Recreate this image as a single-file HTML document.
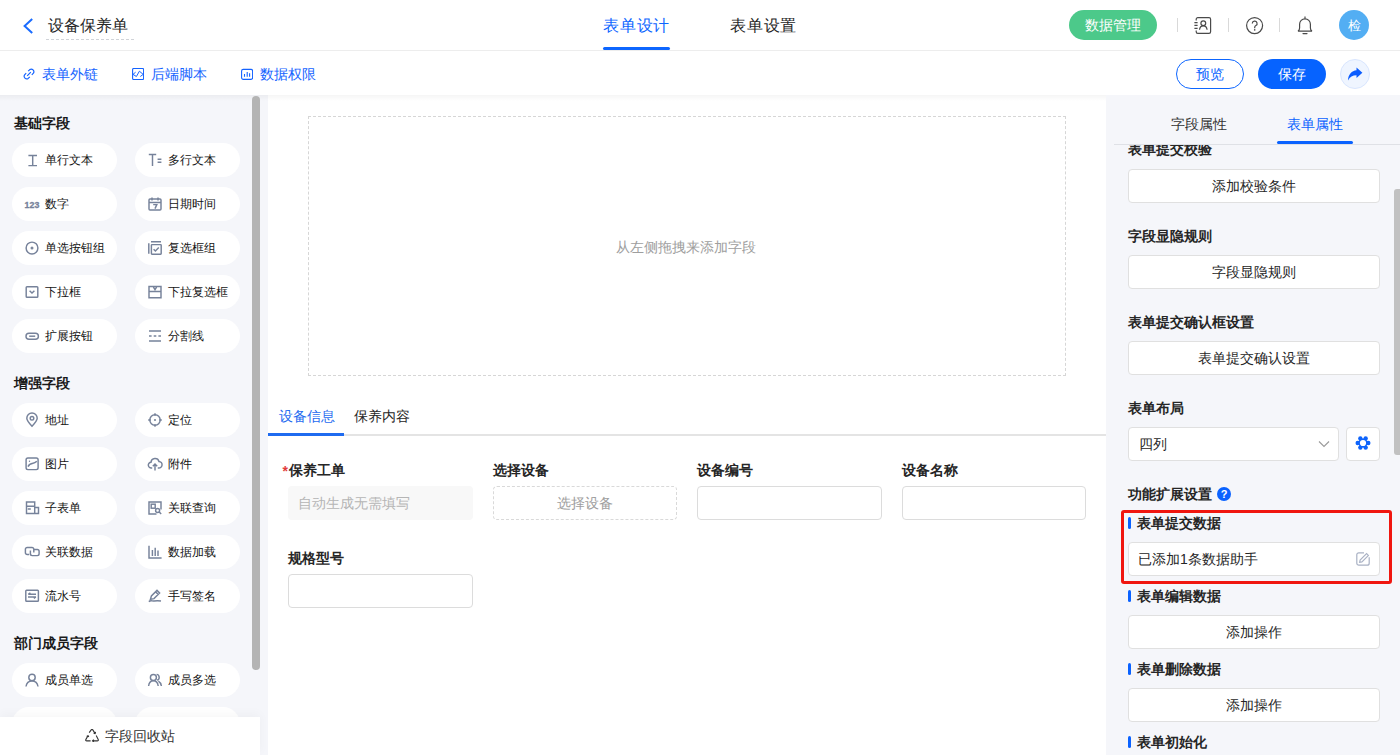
<!DOCTYPE html>
<html><head><meta charset="utf-8">
<style>
*{box-sizing:border-box;margin:0;padding:0}
html,body{width:1400px;height:755px;overflow:hidden;background:#fff;font-family:"Liberation Sans",sans-serif;color:#333;font-size:14px}
.abs{position:absolute}
#hdr{position:absolute;left:0;top:0;width:1400px;height:51px;background:#fff;border-bottom:1px solid #ededed}
#bar2{position:absolute;left:0;top:51px;width:1400px;height:44px;background:#fff}
#left{position:absolute;left:0;top:95px;width:268px;height:660px;background:#f5f6fa}
#center{position:absolute;left:268px;top:95px;width:838px;height:660px;background:#fff}
#right{position:absolute;left:1106px;top:95px;width:294px;height:660px;background:#f5f6fa}
#shadow{position:absolute;left:0;top:95px;width:1400px;height:6px;background:linear-gradient(rgba(0,0,0,0.04),rgba(0,0,0,0))}
.txt{position:absolute;white-space:nowrap;line-height:1}
.hd{position:absolute;left:14px;font-size:14px;font-weight:bold;color:#1a1a1a;line-height:1;white-space:nowrap}
.pill{position:absolute;width:104.5px;height:34px;border-radius:17px;background:#fff}
.ic{position:absolute;fill:none;stroke:#76829a;stroke-width:1.45;overflow:visible}
.pt{position:absolute;font-size:12px;line-height:12px;color:#141414;white-space:nowrap}
.lb{position:absolute;font-size:14px;font-weight:bold;color:#262626;line-height:1;white-space:nowrap}
.inp{height:34px;border:1px solid #dcdcdc;border-radius:4px;background:#fff}
.rh{position:absolute;left:1128px;font-size:14px;font-weight:bold;color:#262626;line-height:1;white-space:nowrap}
.rbtn{position:absolute;left:1128px;width:252px;height:34px;border:1px solid #e0e0e0;border-radius:4px;background:#fff;text-align:center;line-height:32px;font-size:14px;color:#262626}
.bar{position:absolute;left:1128px;width:3px;height:12px;border-radius:1.5px;background:#0a62ff}
</style></head>
<body>
<div id="hdr">
  <svg class="abs" style="left:22px;top:18px" width="12" height="16" viewBox="0 0 12 16"><path d="M10.2 1 L2.6 8 L10.2 15" fill="none" stroke="#1a6cff" stroke-width="2"/></svg>
  <div class="txt" style="left:48px;top:18px;font-size:16px;color:#262626">设备保养单</div>
  <div class="abs" style="left:46px;top:39px;width:88px;border-top:1px dashed #d0d3d8"></div>
  <div class="txt" style="left:603px;top:18px;font-size:16px;letter-spacing:0.8px;color:#0d66ff">表单设计</div>
  <div class="abs" style="left:603px;top:47px;width:67px;height:3px;border-radius:2px;background:#0d66ff"></div>
  <div class="txt" style="left:730px;top:18px;font-size:16px;letter-spacing:0.8px;color:#262626">表单设置</div>
  <div class="abs" style="left:1069px;top:10px;width:88px;height:30px;border-radius:15px;background:#4cc98a"></div>
  <div class="txt" style="left:1085px;top:18px;font-size:14px;color:#fff">数据管理</div>
  <div class="abs" style="left:1177px;top:18px;width:1px;height:14px;background:#d9d9d9"></div>
  <div class="abs" style="left:1228px;top:18px;width:1px;height:14px;background:#d9d9d9"></div>
  <div class="abs" style="left:1279px;top:18px;width:1px;height:14px;background:#d9d9d9"></div>
  <div class="abs" style="left:1339px;top:10px;width:30px;height:30px;border-radius:50%;background:#53aef3"></div>
  <div class="txt" style="left:1348px;top:19px;font-size:13px;color:#fff">检</div>
</div>
<div id="bar2">
  <div class="txt" style="left:42px;top:16px;font-size:14px;color:#1463ff">表单外链</div>
  <div class="txt" style="left:151px;top:16px;font-size:14px;color:#1463ff">后端脚本</div>
  <div class="txt" style="left:260px;top:16px;font-size:14px;color:#1463ff">数据权限</div>
  <div class="abs" style="left:1176px;top:8px;width:68px;height:30px;border-radius:15px;border:1px solid #0d66ff;background:#fff"></div>
  <div class="txt" style="left:1196px;top:16px;font-size:14px;color:#0d66ff">预览</div>
  <div class="abs" style="left:1258px;top:8px;width:68px;height:30px;border-radius:15px;background:#0663ff"></div>
  <div class="txt" style="left:1278px;top:16px;font-size:14px;color:#fff">保存</div>
  <div class="abs" style="left:1340px;top:8px;width:30px;height:30px;border-radius:50%;background:#eff5ff;border:1px solid #d9e6fe"></div>
</div>
<div id="left"></div>
<!--LEFT-->
<div class="hd" style="top:116px">基础字段</div>
<div class="hd" style="top:376px">增强字段</div>
<div class="hd" style="top:636px">部门成员字段</div>
<div class="pill" style="left:12px;top:143px"></div>
<svg class="ic" style="left:25px;top:153px" width="14" height="14" viewBox="0 0 14 14"><path d="M3.4 2.4h8.6M3.4 12.6h8.6M7.7 2.4v10.2"/></svg>
<div class="pt" style="left:45px;top:154px">单行文本</div>
<div class="pill" style="left:135.3px;top:143px"></div>
<svg class="ic" style="left:148px;top:153px" width="14" height="14" viewBox="0 0 14 14"><path d="M0.8 1.5h7.4M4.5 1.5v11.5M9.6 6.2h3.8M9.6 9.2h3.8"/></svg>
<div class="pt" style="left:168px;top:154px">多行文本</div>
<div class="pill" style="left:12px;top:187px"></div>
<svg class="ic" style="left:25px;top:197px" width="14" height="14" viewBox="0 0 14 14"><text x="-0.4" y="10.8" font-size="8.8" style="font-weight:bold;stroke:#76829a;stroke-width:0.3" fill="#76829a" font-family="Liberation Sans">123</text></svg>
<div class="pt" style="left:45px;top:198px">数字</div>
<div class="pill" style="left:135.3px;top:187px"></div>
<svg class="ic" style="left:148px;top:197px" width="14" height="14" viewBox="0 0 14 14"><rect x="1" y="2" width="12" height="11" rx="1"/><path d="M1 5.4h12M4 0.6v3M10 0.6v3M5.2 7.6h3.6l-1.8 4"/></svg>
<div class="pt" style="left:168px;top:198px">日期时间</div>
<div class="pill" style="left:12px;top:231px"></div>
<svg class="ic" style="left:25px;top:241px" width="14" height="14" viewBox="0 0 14 14"><circle cx="7" cy="7" r="5.9"/><circle cx="7" cy="7" r="1.5" fill="#7c879c" stroke="none"/></svg>
<div class="pt" style="left:45px;top:242px">单选按钮组</div>
<div class="pill" style="left:135.3px;top:231px"></div>
<svg class="ic" style="left:148px;top:241px" width="14" height="14" viewBox="0 0 14 14"><path d="M3 0.8h10M0.8 2.2v10.6"/><rect x="3.4" y="3.6" width="9.8" height="9.6" rx="0.6"/><path d="M5.6 8.2l1.8 1.8l3.4-3.6"/></svg>
<div class="pt" style="left:168px;top:242px">复选框组</div>
<div class="pill" style="left:12px;top:275px"></div>
<svg class="ic" style="left:25px;top:285px" width="14" height="14" viewBox="0 0 14 14"><rect x="1.2" y="1.7" width="11.6" height="10.6" rx="0.8"/><path d="M4.6 5.8l2.4 2.3l2.4-2.3"/></svg>
<div class="pt" style="left:45px;top:286px">下拉框</div>
<div class="pill" style="left:135.3px;top:275px"></div>
<svg class="ic" style="left:148px;top:285px" width="14" height="14" viewBox="0 0 14 14"><path d="M1 1.4h12v5H1zM1 6.4v6.4h12V6.4M5.4 2.2l1.6 2.4l1.6-2.4"/></svg>
<div class="pt" style="left:168px;top:286px">下拉复选框</div>
<div class="pill" style="left:12px;top:319px"></div>
<svg class="ic" style="left:25px;top:329px" width="14" height="14" viewBox="0 0 14 14"><rect x="1" y="4.2" width="12.4" height="6" rx="3"/><path d="M4.2 7.2h6"/></svg>
<div class="pt" style="left:45px;top:330px">扩展按钮</div>
<div class="pill" style="left:135.3px;top:319px"></div>
<svg class="ic" style="left:148px;top:329px" width="14" height="14" viewBox="0 0 14 14"><path d="M1 2h12M1 12h12M1 7h2.6M5.7 7h2.6M10.4 7H13"/></svg>
<div class="pt" style="left:168px;top:330px">分割线</div>
<div class="pill" style="left:12px;top:403px"></div>
<svg class="ic" style="left:25px;top:413px" width="14" height="14" viewBox="0 0 14 14"><path d="M7 13.2C3.6 9.6 1.8 7.4 1.8 5.2a5.2 5.2 0 0 1 10.4 0c0 2.2-1.8 4.4-5.2 8z"/><circle cx="7" cy="5.3" r="1.8"/></svg>
<div class="pt" style="left:45px;top:414px">地址</div>
<div class="pill" style="left:135.3px;top:403px"></div>
<svg class="ic" style="left:148px;top:413px" width="14" height="14" viewBox="0 0 14 14"><circle cx="7" cy="7" r="5.2"/><circle cx="7" cy="7" r="1.1" fill="#7c879c" stroke="none"/><path d="M7 0.2v2.6M7 11.2v2.6M0.2 7h2.6M11.2 7h2.6"/></svg>
<div class="pt" style="left:168px;top:414px">定位</div>
<div class="pill" style="left:12px;top:447px"></div>
<svg class="ic" style="left:25px;top:457px" width="14" height="14" viewBox="0 0 14 14"><rect x="1.1" y="0.9" width="12" height="11.7" rx="1.8"/><path d="M3 9.6C4 7.2 5.4 6.6 8 6.3S10.6 5.3 11.8 4.2"/><circle cx="4.5" cy="4.3" r="0.7" fill="#76829a" stroke="none"/></svg>
<div class="pt" style="left:45px;top:458px">图片</div>
<div class="pill" style="left:135.3px;top:447px"></div>
<svg class="ic" style="left:148px;top:457px" width="14" height="14" viewBox="0 0 14 14"><path d="M4.2 11H3.4a2.9 2.9 0 0 1-0.4-5.8A4.1 4.1 0 0 1 11 4.5A3.1 3.1 0 0 1 10.6 11h-0.8M7 13.4V7M4.8 9.2L7 7l2.2 2.2"/></svg>
<div class="pt" style="left:168px;top:458px">附件</div>
<div class="pill" style="left:12px;top:491px"></div>
<svg class="ic" style="left:25px;top:501px" width="14" height="14" viewBox="0 0 14 14"><path d="M1.5 1h8.2v11.5H1.5zM1.5 5.3h8.2M2.8 7.9h3M9.7 6.4h3.8v6.1H9.7"/></svg>
<div class="pt" style="left:45px;top:502px">子表单</div>
<div class="pill" style="left:135.3px;top:491px"></div>
<svg class="ic" style="left:148px;top:501px" width="14" height="14" viewBox="0 0 14 14"><path d="M13 8.5V1H1v12h7.5"/><rect x="3.2" y="3.2" width="4" height="4"/><circle cx="9.6" cy="9.4" r="2"/><path d="M11 10.8l2.2 2.2"/></svg>
<div class="pt" style="left:168px;top:502px">关联查询</div>
<div class="pill" style="left:12px;top:535px"></div>
<svg class="ic" style="left:25px;top:545px" width="14" height="14" viewBox="0 0 14 14"><path d="M4.2 9.5H2.2a1.8 1.8 0 0 1-1.8-1.8V4.3a1.8 1.8 0 0 1 1.8-1.8h4.8a1.8 1.8 0 0 1 1.8 1.8V7.6M8.5 4.4h3.8a1.8 1.8 0 0 1 1.8 1.8v2.6a1.8 1.8 0 0 1-1.8 1.8H7.2a1.8 1.8 0 0 1-1.8-1.8V5.4"/></svg>
<div class="pt" style="left:45px;top:546px">关联数据</div>
<div class="pill" style="left:135.3px;top:535px"></div>
<svg class="ic" style="left:148px;top:545px" width="14" height="14" viewBox="0 0 14 14"><path d="M1 0.8v12.2h12.6M4.4 5v6M7.2 2.8v8.2M10 5.4v5.6"/></svg>
<div class="pt" style="left:168px;top:546px">数据加载</div>
<div class="pill" style="left:12px;top:579px"></div>
<svg class="ic" style="left:25px;top:589px" width="14" height="14" viewBox="0 0 14 14"><rect x="0.8" y="1.3" width="12.6" height="10.9" rx="0.8"/><path d="M3 5.3h8M3.2 5.3l2.2-1.4M11 8H3M11 8l-2.2 1.4"/></svg>
<div class="pt" style="left:45px;top:590px">流水号</div>
<div class="pill" style="left:135.3px;top:579px"></div>
<svg class="ic" style="left:148px;top:589px" width="14" height="14" viewBox="0 0 14 14"><path d="M2.4 10.4l1-3.4l5.6-5.6l2.6 2.6l-5.6 5.6zM7.6 2.8l2.6 2.6M0.8 12.6c2.2-1.8 3.6-0.2 5.4-0.6s3.4-0.6 6.8 0"/></svg>
<div class="pt" style="left:168px;top:590px">手写签名</div>
<div class="pill" style="left:12px;top:663px"></div>
<svg class="ic" style="left:25px;top:673px" width="14" height="14" viewBox="0 0 14 14"><circle cx="7" cy="4.4" r="3.2"/><path d="M1 13.5c0.5-3.4 2.8-5.6 6-5.6s5.5 2.2 6 5.6"/></svg>
<div class="pt" style="left:45px;top:674px">成员单选</div>
<div class="pill" style="left:135.3px;top:663px"></div>
<svg class="ic" style="left:148px;top:673px" width="14" height="14" viewBox="0 0 14 14"><circle cx="5.4" cy="4.4" r="3"/><path d="M0.6 13c0.4-3.2 2.3-5.2 4.8-5.2s4.4 2 4.8 5.2M8.6 1.4a3 3 0 0 1 0.6 5.8M10.4 8.2c1.6 0.9 2.6 2.5 3 4.8"/></svg>
<div class="pt" style="left:168px;top:674px">成员多选</div>
<div class="pill" style="left:12px;top:707px"></div>
<div class="pill" style="left:135.3px;top:707px"></div>
<!--/LEFT-->
<div id="center"></div>
<!--CENTER-->
<div class="abs" style="left:308px;top:116px;width:758px;height:260px;border:1px dashed #d6d6d6"></div>
<div class="txt" style="left:616px;top:240px;font-size:14px;color:#9e9e9e">从左侧拖拽来添加字段</div>
<div class="txt" style="left:279px;top:409px;font-size:14px;color:#1f6bf0">设备信息</div>
<div class="txt" style="left:354px;top:409px;font-size:14px;color:#262626">保养内容</div>
<div class="abs" style="left:268px;top:434px;width:838px;height:2px;background:#e4e4e4"></div>
<div class="abs" style="left:268px;top:433px;width:76px;height:3px;background:#1f6bf0"></div>
<div class="txt" style="left:282.5px;top:464px;font-size:14px;font-weight:bold;color:#e23b3b">*</div>
<div class="lb" style="left:289px;top:463px">保养工单</div>
<div class="lb" style="left:493px;top:463px">选择设备</div>
<div class="lb" style="left:697px;top:463px">设备编号</div>
<div class="lb" style="left:902px;top:463px">设备名称</div>
<div class="abs" style="left:288px;top:486px;width:185px;height:34px;border-radius:4px;background:#f8f8f8"></div>
<div class="txt" style="left:298px;top:496px;font-size:14px;color:#b5b5b5">自动生成无需填写</div>
<div class="abs" style="left:493px;top:486px;width:184px;height:34px;border-radius:4px;border:1px dashed #d9d9d9"></div>
<div class="txt" style="left:557px;top:496px;font-size:14px;color:#9e9e9e">选择设备</div>
<div class="abs inp" style="left:697px;top:486px;width:185px"></div>
<div class="abs inp" style="left:902px;top:486px;width:184px"></div>
<div class="lb" style="left:288px;top:551px">规格型号</div>
<div class="abs inp" style="left:288px;top:574px;width:185px"></div>
<!--/CENTER-->
<div id="right"></div>
<!--RIGHT-->
<div class="rh" style="top:142px">表单提交校验</div>
<div class="rbtn" style="top:169px">添加校验条件</div>
<div class="rh" style="top:229px">字段显隐规则</div>
<div class="rbtn" style="top:255px">字段显隐规则</div>
<div class="rh" style="top:315px">表单提交确认框设置</div>
<div class="rbtn" style="top:341px">表单提交确认设置</div>
<div class="rh" style="top:401px">表单布局</div>
<div class="abs" style="left:1128px;top:427px;width:211px;height:34px;border:1px solid #e0e0e0;border-radius:4px;background:#fff"></div>
<div class="txt" style="left:1139px;top:437px;font-size:14px;color:#262626">四列</div>
<svg class="abs" style="left:1318px;top:440px" width="12" height="8" viewBox="0 0 12 8"><path d="M1 1.5l5 5l5-5" fill="none" stroke="#9a9a9a" stroke-width="1.1"/></svg>
<div class="abs" style="left:1346px;top:427px;width:34px;height:34px;border:1px solid #e0e0e0;border-radius:4px;background:#fff"></div>
<svg class="abs" style="left:1355px;top:435px" width="16" height="16" viewBox="0 0 16 16"><g fill="#0d63fb"><path d="M13.3 8L10.65 12.59H5.35L2.7 8L5.35 3.41H10.65z"/><circle cx="13.3" cy="8" r="2.2"/><circle cx="10.65" cy="12.59" r="2.2"/><circle cx="5.35" cy="12.59" r="2.2"/><circle cx="2.7" cy="8" r="2.2"/><circle cx="5.35" cy="3.41" r="2.2"/><circle cx="10.65" cy="3.41" r="2.2"/></g><circle cx="8" cy="8" r="3.1" fill="#fff"/></svg>
<div class="rh" style="top:487px">功能扩展设置</div>
<svg class="abs" style="left:1217px;top:487px" width="14" height="14" viewBox="0 0 14 14"><circle cx="7" cy="7" r="7" fill="#0a62ff"/><text x="7" y="10.8" text-anchor="middle" font-size="11" style="font-weight:bold" fill="#fff" font-family="Liberation Sans">?</text></svg>
<div class="abs" style="left:1121px;top:510px;width:271px;height:74px;border:3px solid #f0160f;border-radius:3px"></div>
<div class="bar" style="top:517px"></div><div class="rh" style="left:1137px;top:516px">表单提交数据</div>
<div class="abs" style="left:1128px;top:542px;width:252px;height:34px;border:1px solid #e0e0e0;border-radius:4px;background:#fff"></div>
<div class="txt" style="left:1138px;top:552px;font-size:14px;color:#262626">已添加1条数据助手</div>
<svg class="abs" style="left:1356px;top:552px" width="14" height="14" viewBox="0 0 14 14"><path d="M8 0.8H2.8A2 2 0 0 0 0.8 2.8v8.4a2 2 0 0 0 2 2h8.4a2 2 0 0 0 2-2V5.2" fill="none" stroke="#a9b1c4" stroke-width="1.2"/><path d="M3.6 10.4l0.5-2.3l6.5-6.5l1.8 1.8l-6.5 6.5z" fill="none" stroke="#a9b1c4" stroke-width="1.1"/></svg>
<div class="bar" style="top:590px"></div><div class="rh" style="left:1137px;top:589px">表单编辑数据</div>
<div class="rbtn" style="top:615px">添加操作</div>
<div class="bar" style="top:663px"></div><div class="rh" style="left:1137px;top:662px">表单删除数据</div>
<div class="rbtn" style="top:688px">添加操作</div>
<div class="bar" style="top:736px"></div><div class="rh" style="left:1137px;top:735px">表单初始化</div>
<!--/RIGHT-->
<div id="shadow"></div>
<!--EXTRA-->
<div class="abs" style="left:1106px;top:95px;width:294px;height:49px;background:#f5f6fa"></div>
<div class="abs" style="left:1114px;top:144px;width:286px;height:1px;background:#dfe1e6"></div>
<div class="txt" style="left:1171px;top:117px;font-size:14px;color:#333">字段属性</div>
<div class="txt" style="left:1287px;top:117px;font-size:14px;color:#0a62ff">表单属性</div>
<div class="abs" style="left:1277px;top:141px;width:76px;height:3px;border-radius:2px;background:#0a62ff"></div>
<div class="abs" style="left:1394px;top:189px;width:6px;height:266px;border-radius:3px 0 0 3px;background:#c1c1c1"></div>
<div class="abs" style="left:252px;top:96px;width:8px;height:574px;border-radius:4px;background:#b4b4b4"></div>
<div class="abs" style="left:0;top:717px;width:260px;height:38px;background:#fff;box-shadow:0 -3px 10px rgba(0,0,0,0.035)"></div>
<svg class="abs" style="left:85px;top:729px" width="14" height="13" viewBox="0 0 14 13"><g fill="none" stroke="#333" stroke-width="1.1" stroke-linejoin="round"><path d="M4.2 3.6L6.2 0.9Q7 -0.1 7.8 0.9L10 4.4M8.6 4.2l1.6 0.4l0.3-1.7"/><path d="M11.2 6.6L13.2 10.4Q13.8 11.9 12.2 11.9H7.4M8.8 10.6l-1.4 1.3l1.4 1"/><path d="M5.6 11.9H1.8Q0.2 11.9 0.9 10.4L3 6.8M1.7 7.5l1.3-0.9l0.8 1.5"/></g></svg>
<div class="txt" style="left:105px;top:729px;font-size:14px;color:#333">字段回收站</div>
<!-- header icons -->
<svg class="abs" style="left:1194px;top:17px" width="18" height="17" viewBox="0 0 18 17"><g fill="none" stroke="#4a4a4a" stroke-width="1.2"><path d="M2.2 3.6V2.3a1.6 1.6 0 0 1 1.6-1.6H15a1.6 1.6 0 0 1 1.6 1.6v12.5a1.6 1.6 0 0 1-1.6 1.6H3.8a1.6 1.6 0 0 1-1.6-1.6V13.4"/><path d="M0.4 5.6h3.2M0.4 8.3h3.2M0.4 11.3h3.2"/><circle cx="9.3" cy="6.3" r="2.4"/><path d="M5.5 12.8C5.8 10.3 7.3 8.9 9.3 8.9S12.8 10.3 13.1 12.8"/></g></svg>
<svg class="abs" style="left:1246px;top:17px" width="18" height="18" viewBox="0 0 18 18"><g fill="none" stroke="#4a4a4a" stroke-width="1.2"><circle cx="8.6" cy="8.6" r="8"/><path d="M6.3 6.6a2.4 2.4 0 1 1 3.6 2c-0.8 0.5-1.2 0.9-1.2 1.8v0.8"/></g><circle cx="8.7" cy="12.9" r="0.8" fill="#4a4a4a"/></svg>
<svg class="abs" style="left:1297px;top:16px" width="16" height="19" viewBox="0 0 16 19"><g fill="none" stroke="#4a4a4a" stroke-width="1.2"><path d="M8 0.6v1.6M1 15.1C2.2 14.5 2.6 13.5 2.6 12V8.2A5.4 5.4 0 0 1 13.4 8.2V12C13.4 13.5 13.8 14.5 15 15.1Z"/><path d="M6 17.6h4" stroke-linecap="round"/></g></svg>
<svg class="abs" style="left:1347px;top:67px" width="16" height="14" viewBox="0 0 16 14"><path d="M1 13.4C1.3 7.6 4.8 3.6 9.5 3.3V0.5L15.4 5.8L9.5 11.1V8.3C5.6 8.3 3 10 1 13.4Z" fill="#0b5dff"/></svg>
<!-- bar2 icons -->
<svg class="abs" style="left:23px;top:68px" width="12" height="12" viewBox="0 0 12 12"><path d="M5.2 3.2l1.6-1.6a2.6 2.6 0 0 1 3.6 3.6L8.8 6.8M6.8 8.8l-1.6 1.6a2.6 2.6 0 0 1-3.6-3.6L3.2 5.2M4.2 7.8l3.6-3.6" fill="none" stroke="#1463ff" stroke-width="1.2"/></svg>
<svg class="abs" style="left:132px;top:68px" width="12" height="12" viewBox="0 0 12 12"><rect x="0.6" y="0.5" width="11" height="11" rx="1" fill="none" stroke="#1463ff" stroke-width="1.1"/><path d="M3.6 4.2L1 6.4L4.4 8.5L7.4 3.2L11.2 6.4L8.3 8.5" fill="none" stroke="#1463ff" stroke-width="1"/></svg>
<svg class="abs" style="left:241px;top:68px" width="12" height="12" viewBox="0 0 12 12"><rect x="0.6" y="1.4" width="11" height="10" rx="1.6" fill="none" stroke="#1463ff" stroke-width="1.1"/><path d="M3.5 6v2.8M6.2 4v4.8M8.6 5.3v3.5" fill="none" stroke="#1463ff" stroke-width="1.1"/></svg>
<!--/EXTRA-->

</body></html>
